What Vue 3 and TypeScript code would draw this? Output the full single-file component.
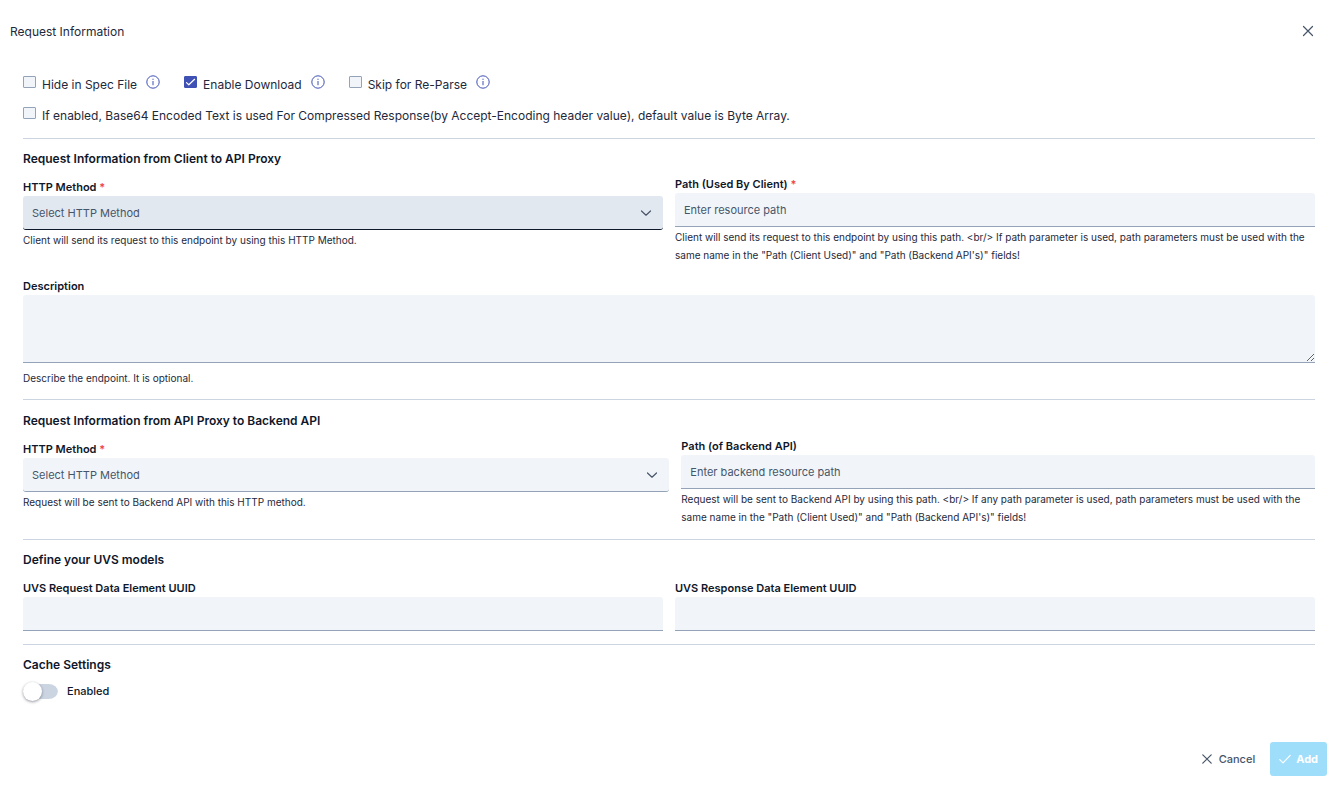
<script setup lang="ts">
import { ref } from 'vue'

interface Flag {
  id: string
  label: string
  info: boolean
  checked: boolean
}

const flags = ref<Flag[]>([
  { id: 'hide-spec', label: 'Hide in Spec File', info: true, checked: false },
  { id: 'enable-download', label: 'Enable Download', info: true, checked: true },
  { id: 'skip-reparse', label: 'Skip for Re-Parse', info: true, checked: false },
  {
    id: 'base64',
    label:
      'If enabled, Base64 Encoded Text is used For Compressed Response(by Accept-Encoding header value), default value is Byte Array.',
    info: false,
    checked: false,
  },
])

const methods: string[] = ['GET', 'POST', 'PUT', 'DELETE', 'PATCH', 'HEAD', 'OPTIONS']
const clientMethod = ref('')
const backendMethod = ref('')
const clientPath = ref('')
const backendPath = ref('')
const description = ref('')
const requestUuid = ref('')
const responseUuid = ref('')
const cacheEnabled = ref(false)
</script>

<template>
  <form class="dialog" @submit.prevent>
    <header class="titlebar">
      <h1 class="title">Request Information</h1>
      <button type="button" class="close" aria-label="Close">
        <svg width="12" height="12" viewBox="0 0 12 12" fill="none" stroke="currentColor" stroke-width="1.2" stroke-linecap="round">
          <path d="M1.5 1.5 10.5 10.5M10.5 1.5 1.5 10.5" />
        </svg>
      </button>
    </header>

    <main class="content">
      <div class="flags">
        <div v-for="flag in flags" :key="flag.id" class="flag" :class="{ wide: !flag.info }">
          <span class="tick">
            <input :id="flag.id" v-model="flag.checked" type="checkbox" />
            <svg v-if="flag.checked" width="13" height="12" viewBox="0 0 13 12" fill="none" stroke="#fff" stroke-width="1.2" stroke-linecap="round" stroke-linejoin="round">
              <path d="M2.5 6.6 4.8 8.8 10.6 3.3" />
            </svg>
          </span>
          <label :for="flag.id">{{ flag.label }}</label>
          <svg v-if="flag.info" class="info" width="14" height="14" viewBox="0 0 14 14" fill="none" stroke="currentColor" stroke-width="1">
            <circle cx="7" cy="7" r="6.2" />
            <path d="M7 6v4.2M7 3.7v1.2" />
          </svg>
        </div>
      </div>

      <section class="section client">
        <h2>Request Information from Client to API Proxy</h2>
        <div class="pair">
          <div class="field low">
            <label for="client-method">HTTP Method <em>*</em></label>
            <div class="select active">
              <select id="client-method" v-model="clientMethod">
                <option value="" disabled>Select HTTP Method</option>
                <option v-for="m in methods" :key="m">{{ m }}</option>
              </select>
              <svg width="12" height="12" viewBox="0 0 12 12" fill="none" stroke="currentColor" stroke-width="1.2" stroke-linecap="round" stroke-linejoin="round">
                <path d="M1.5 4 6 8.2 10.5 4" />
              </svg>
            </div>
            <small>Client will send its request to this endpoint by using this HTTP Method.</small>
          </div>
          <div class="field">
            <label for="client-path">Path (Used By Client) <em>*</em></label>
            <input id="client-path" v-model="clientPath" type="text" placeholder="Enter resource path" />
            <small>Client will send its request to this endpoint by using this path. &lt;br/&gt; If path parameter is used, path parameters must be used with the same name in the "Path (Client Used)" and "Path (Backend API's)" fields!</small>
          </div>
        </div>
        <div class="field description">
          <label for="description">Description</label>
          <textarea id="description" v-model="description"></textarea>
          <small>Describe the endpoint. It is optional.</small>
        </div>
      </section>

      <section class="section backend">
        <h2>Request Information from API Proxy to Backend API</h2>
        <div class="pair uneven">
          <div class="field low">
            <label for="backend-method">HTTP Method <em>*</em></label>
            <div class="select">
              <select id="backend-method" v-model="backendMethod">
                <option value="" disabled>Select HTTP Method</option>
                <option v-for="m in methods" :key="m">{{ m }}</option>
              </select>
              <svg width="12" height="12" viewBox="0 0 12 12" fill="none" stroke="currentColor" stroke-width="1.2" stroke-linecap="round" stroke-linejoin="round">
                <path d="M1.5 4 6 8.2 10.5 4" />
              </svg>
            </div>
            <small>Request will be sent to Backend API with this HTTP method.</small>
          </div>
          <div class="field">
            <label for="backend-path">Path (of Backend API)</label>
            <input id="backend-path" v-model="backendPath" type="text" placeholder="Enter backend resource path" />
            <small>Request will be sent to Backend API by using this path. &lt;br/&gt; If any path parameter is used, path parameters must be used with the same name in the "Path (Client Used)" and "Path (Backend API's)" fields!</small>
          </div>
        </div>
      </section>

      <section class="section models">
        <h2>Define your UVS models</h2>
        <div class="pair">
          <div class="field">
            <label for="request-uuid">UVS Request Data Element UUID</label>
            <input id="request-uuid" v-model="requestUuid" type="text" />
          </div>
          <div class="field">
            <label for="response-uuid">UVS Response Data Element UUID</label>
            <input id="response-uuid" v-model="responseUuid" type="text" />
          </div>
        </div>
      </section>

      <section class="section cache">
        <h2>Cache Settings</h2>
        <div class="switch">
          <input id="cache" v-model="cacheEnabled" type="checkbox" role="switch" />
          <label for="cache">Enabled</label>
        </div>
      </section>
    </main>

    <footer class="actions">
      <button type="button" class="cancel">
        <svg width="12" height="12" viewBox="0 0 12 12" fill="none" stroke="currentColor" stroke-width="1.2" stroke-linecap="round">
          <path d="M1.8 1.8 10.2 10.2M10.2 1.8 1.8 10.2" />
        </svg>
        Cancel
      </button>
      <button type="submit" class="add" disabled>
        <svg width="12" height="12" viewBox="0 0 12 12" fill="none" stroke="currentColor" stroke-width="1.2" stroke-linecap="round" stroke-linejoin="round">
          <path d="M.8 6.6 4 9.8 11.2 2.4" />
        </svg>
        Add
      </button>
    </footer>
  </form>
</template>

<style>
body {
  background: #fff;
}
</style>

<style scoped>
.dialog,
.dialog * {
  box-sizing: border-box;
}
.dialog {
  font-family: Inter, 'Liberation Sans', sans-serif;
  font-size: 11px;
  color: #0f172a;
  padding: 16px 8px 11px 10px;
}
button,
input,
select,
textarea {
  font: inherit;
  color: inherit;
  margin: 0;
}
svg {
  display: block;
  flex: none;
}
.titlebar {
  display: flex;
  align-items: center;
  justify-content: space-between;
  height: 30px;
  padding-right: 7px;
}
.title {
  margin: 0;
  font-size: 12px;
  font-weight: 400;
  color: #1e293b;
}
.close {
  display: grid;
  place-items: center;
  width: 24px;
  height: 24px;
  padding: 0;
  border: 0;
  background: none;
  color: #475569;
}
.content {
  padding: 23px 12px 0 13px;
}
.flags {
  display: flex;
  flex-wrap: wrap;
  gap: 0 24px;
  padding-bottom: 7px;
}
.flag {
  display: flex;
  gap: 6px;
  height: 31px;
  font-size: 12px;
  line-height: 32px;
  color: #1e293b;
}
.flag.wide {
  width: 100%;
}
.tick {
  display: grid;
  align-self: start;
  margin-top: 7px;
}
.tick > * {
  grid-area: 1 / 1;
  pointer-events: none;
}
.tick input {
  appearance: none;
  width: 13px;
  height: 12px;
  border: 1px solid #94a3b8;
  border-radius: 1px;
  background: #f1f5f9;
  pointer-events: auto;
}
.tick input:checked {
  border-color: #3f51b5;
  background: #3f51b5;
}
.info {
  margin: 6px 0 0 3px;
  color: #3f51b5;
}
.section {
  border-top: 1px solid #cbd5e1;
}
h2 {
  margin: 0;
  font-size: 12px;
  line-height: 20px;
  font-weight: 600;
}
.client {
  padding: 10px 0 12px;
}
.backend {
  padding: 11px 0 13px;
}
.models {
  padding: 10px 0 13px;
}
.cache {
  padding: 10px 0 41px;
}
.pair {
  display: grid;
  grid-template-columns: 1fr 1fr;
  column-gap: 12px;
  align-items: start;
  padding-top: 9px;
}
.client .pair,
.backend .pair {
  padding-top: 6px;
}
.pair.uneven {
  grid-template-columns: 51fr 50fr;
}
.field {
  display: flex;
  flex-direction: column;
}
.field.low {
  padding-top: 3px;
}
.field label {
  line-height: 18px;
  font-weight: 600;
}
.field em {
  font-style: normal;
  color: #ef4444;
}
.field > input,
.select select,
textarea {
  width: 100%;
  height: 34px;
  padding: 0 9px;
  border: 0;
  border-bottom: 1px solid #94a3b8;
  border-radius: 3px 3px 0 0;
  outline: 0;
  background: #f1f5f9;
}
.field > input::placeholder {
  color: #475569;
  opacity: 1;
}
.select {
  display: grid;
  align-items: center;
  color: #475569;
}
.select > * {
  grid-area: 1 / 1;
}
.select select {
  appearance: none;
  border-radius: 3px;
}
.select svg {
  justify-self: end;
  margin-right: 11px;
  pointer-events: none;
}
.select.active select {
  background: #e2e8f0;
  border-color: #0f172a;
}
small {
  font-size: 10px;
  line-height: 18px;
  padding-top: 1px;
  color: #1e293b;
}
.description {
  padding-top: 13px;
}
textarea {
  display: block;
  height: 68px;
  padding: 8px 9px;
  resize: vertical;
}
.description small {
  padding-top: 6px;
}
.switch {
  display: flex;
  align-items: center;
  gap: 9px;
  padding-top: 7px;
}
.switch label {
  line-height: 19px;
  font-weight: 500;
}
.switch input {
  appearance: none;
  width: 35px;
  height: 19px;
  border: solid transparent;
  border-width: 2px 0;
  border-radius: 10px;
  background: #cbd5e1 padding-box;
}
.switch input::before {
  content: '';
  display: block;
  width: 19px;
  height: 19px;
  margin-top: -2px;
  border-radius: 50%;
  background: #fff;
  box-shadow: 0 1px 3px rgba(15, 23, 42, 0.45);
}
.switch input:checked::before {
  margin-left: 16px;
}
.actions {
  display: flex;
  justify-content: flex-end;
  gap: 6px;
}
.actions button {
  display: flex;
  align-items: center;
  gap: 5px;
  height: 34px;
  padding: 0 9px;
  border: 0;
  border-radius: 3px;
}
.actions .cancel {
  gap: 6px;
  background: none;
  color: #475569;
  font-weight: 500;
}
.actions .add {
  background: #9fdefb;
  color: #fff;
  font-weight: 700;
}
</style>
